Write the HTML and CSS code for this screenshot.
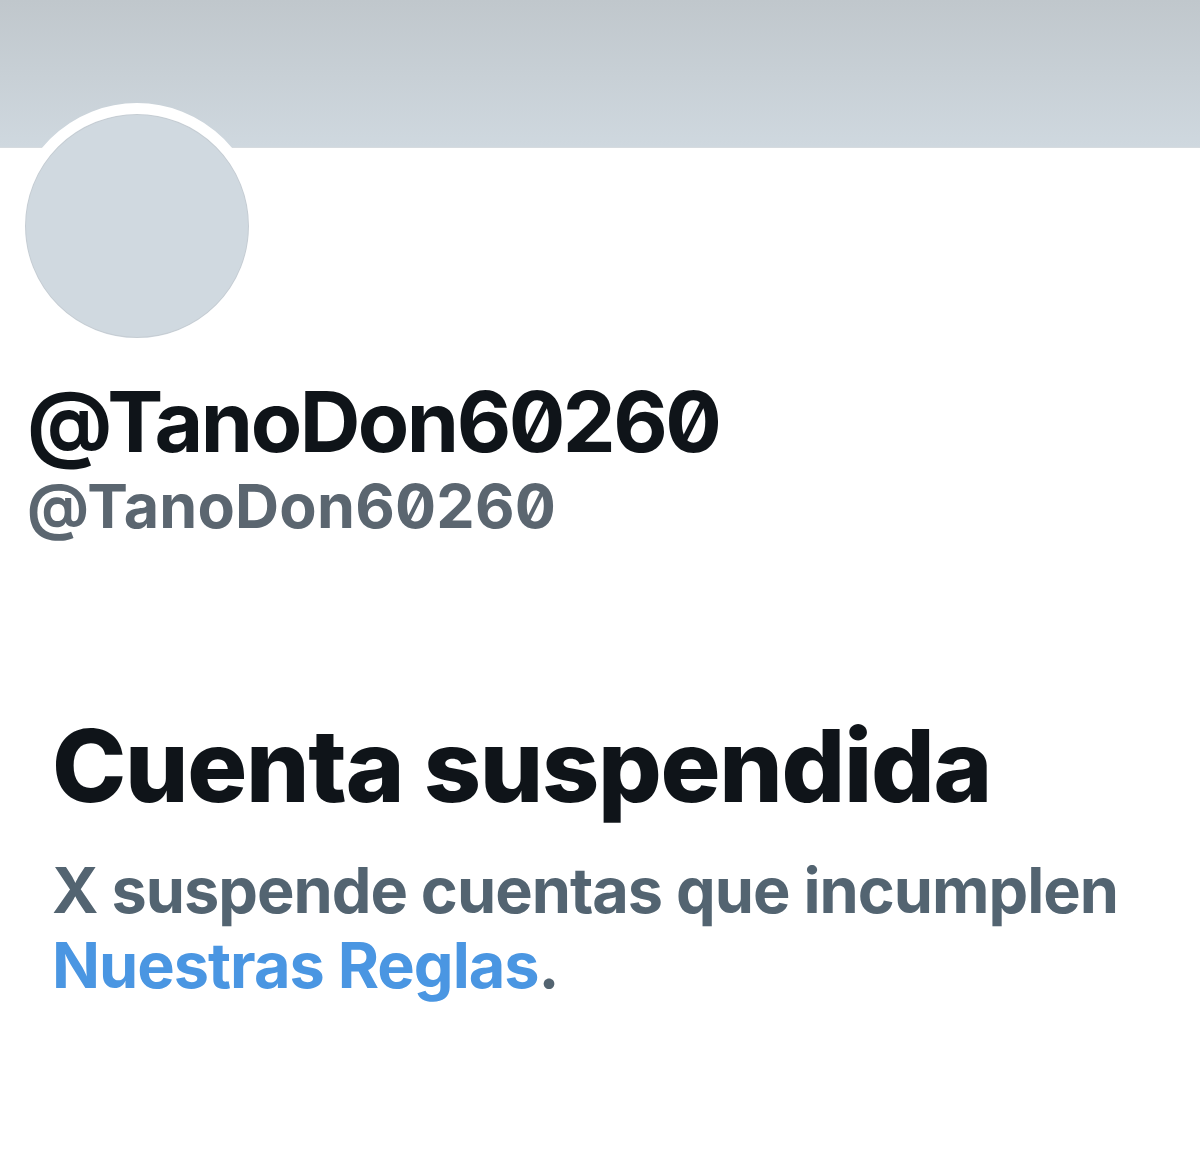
FILE: index.html
```html
<!DOCTYPE html>
<html lang="es">
<head>
    <meta charset="UTF-8">
    <meta name="viewport" content="width=device-width, initial-scale=1.0">
    <title>Cuenta suspendida</title>
    <link rel="stylesheet" href="styles.css">
</head>
<body>
    <div class="banner"></div>
    <div class="profile">
        <div class="avatar"></div>
        <div class="names">
            <div class="display-name">@TanoDon60260</div>
            <div class="handle">@TanoDon60260</div>
        </div>
    </div>
    <div class="notice">
        <h1>Cuenta suspendida</h1>
        <p>X suspende cuentas que incumplen <a href="#">Nuestras Reglas</a>.</p>
    </div>
</body>
</html>
```
FILE: styles.css
```css
body {
    margin: 0;
    background: #fff;
    font-family: 'Inter', 'Liberation Sans', sans-serif;
    font-feature-settings: "zero";
    color: #0f1419;
}
.banner {
    height: 147px;
    background: linear-gradient(180deg, #c0c7cc, #cfd8df);
    border-bottom: 1px solid #d6dbdf;
}
.profile {
    padding: 0 0 0 14px;
}
.avatar {
    width: 224px;
    height: 224px;
    margin-top: -45px;
    border-radius: 50%;
    background: #d0d9e0;
    border: 11px solid #fff;
    box-shadow: inset 0 0 0 1px #c6cdd3;
}
.names {
    padding: 25px 0 0 13px;
}
.display-name {
    font-size: 84px;
    font-weight: 700;
    line-height: 96px;
    letter-spacing: -2.5px;
}
.handle {
    font-size: 61px;
    font-weight: 700;
    line-height: 72px;
    color: #5b6670;
    letter-spacing: 0.2px;
}
.notice {
    padding: 164px 0 0 52px;
}
.notice h1 {
    margin: 0;
    font-size: 100px;
    font-weight: 800;
    line-height: 120px;
    letter-spacing: -1.3px;
}
.notice p {
    margin: 27px 0 0;
    font-size: 63px;
    font-weight: 700;
    line-height: 75px;
    color: #536471;
    letter-spacing: -1px;
    max-width: 1120px;
}
.notice a {
    color: #4a96e2;
    text-decoration: none;
}
```
